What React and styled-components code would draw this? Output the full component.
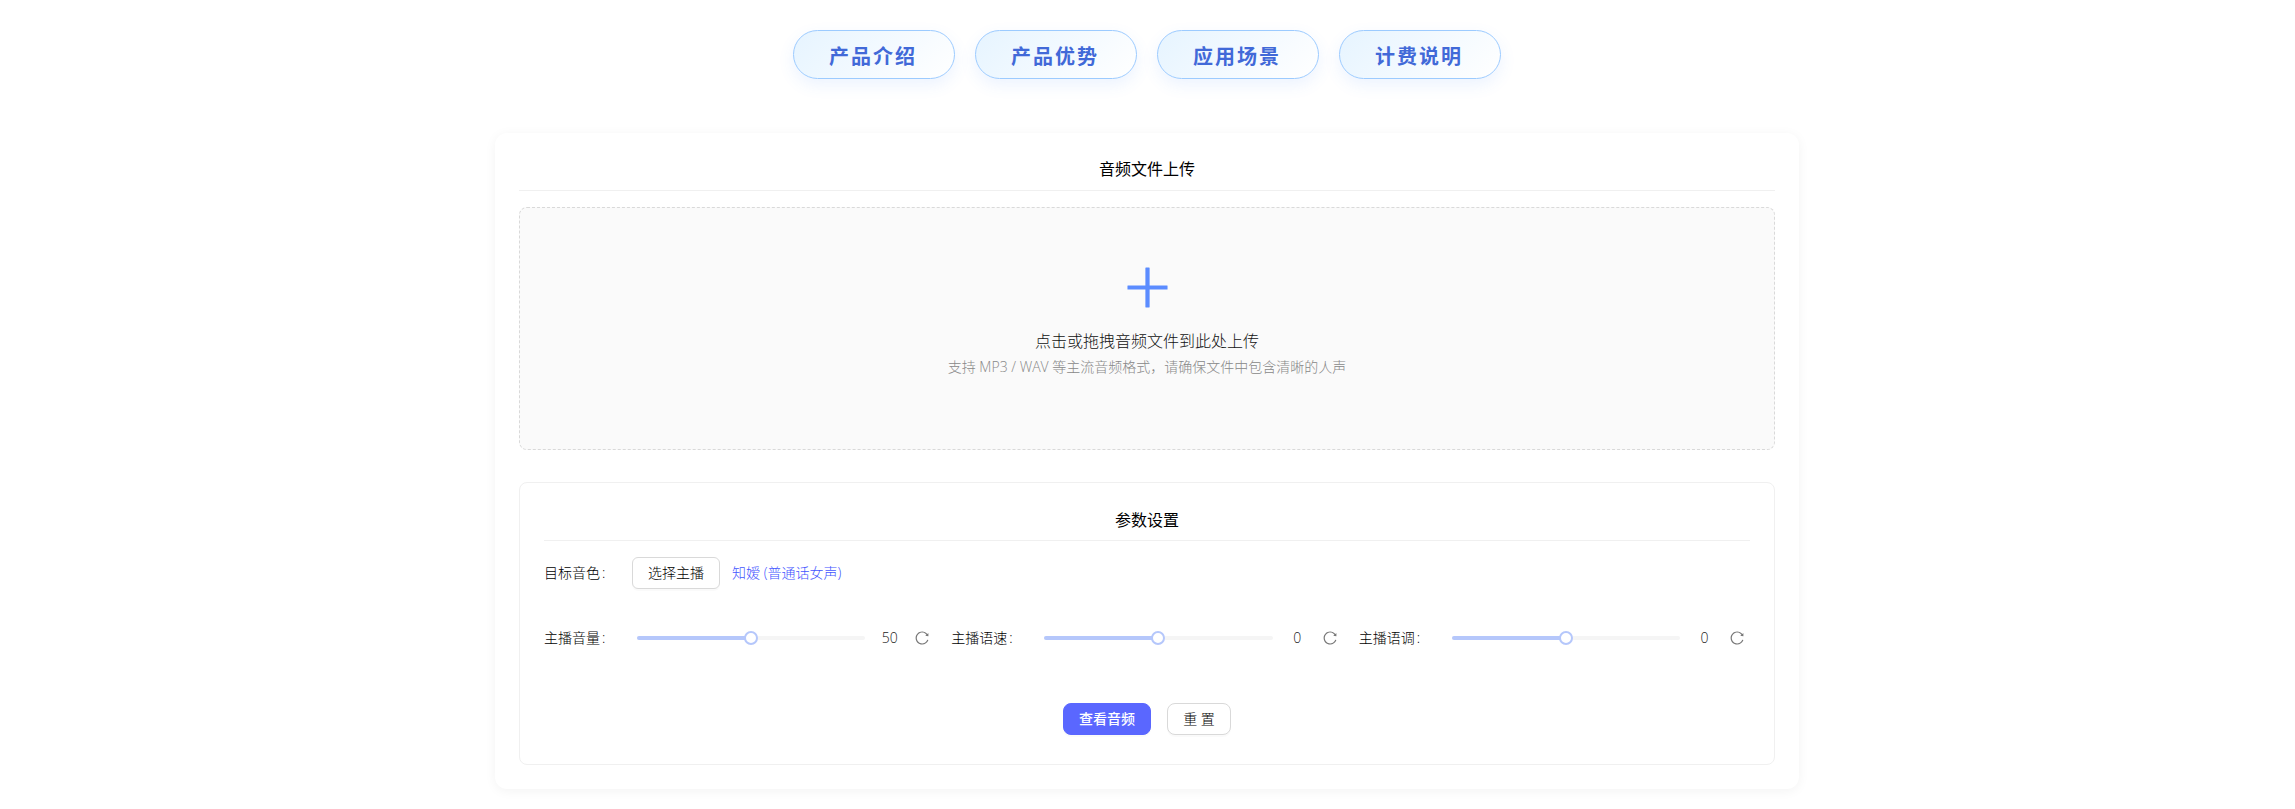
import React from 'react'
import styled, { createGlobalStyle } from 'styled-components'
import { AiOutlinePlus, AiOutlineReload } from 'react-icons/ai'

const GlobalStyle = createGlobalStyle`
  html, body {
    margin: 0;
    padding: 0;
    height: 100%;
    overflow: hidden;
    background: #fff;
  }
  body {
    font-family: "Open Sans", "Noto Sans CJK SC", sans-serif;
    font-size: 14px;
    font-weight: 300;
    color: #111;
  }
  * {
    box-sizing: border-box;
  }
`

const Page = styled.div`
  padding: 30px 1px 0 0;
`

const TabBar = styled.nav`
  display: flex;
  justify-content: center;
  gap: 20px;
  margin-bottom: 54px;
`

const Tab = styled.div`
  width: 162px;
  height: 49px;
  padding: 2px 2px 0 0;
  display: flex;
  align-items: center;
  justify-content: center;
  border: 1px solid #9ccbff;
  border-radius: 25px;
  background: linear-gradient(135deg, #e6f4ff 0%, #ffffff 100%);
  box-shadow: 0 6px 16px rgba(64, 140, 255, 0.1);
  color: #4169d8;
  font-size: 20px;
  font-weight: 700;
  letter-spacing: 2px;
`

const Card = styled.main`
  width: 1304px;
  margin: 0 auto;
  padding: 24px;
  background: #fff;
  border-radius: 12px;
  box-shadow: 0 2px 12px rgba(0, 0, 0, 0.05);
`

const SectionTitle = styled.h2`
  margin: 0 0 16px;
  padding-bottom: 9px;
  border-bottom: 1px solid #f0f0f0;
  color: #000;
  font-size: 16px;
  font-weight: 400;
  line-height: 24px;
  text-align: center;
`

const ParamsTitle = styled(SectionTitle)`
  padding-bottom: 8px;
`

const UploadZone = styled.div`
  height: 243px;
  padding-top: 51px;
  display: flex;
  flex-direction: column;
  align-items: center;
  background: #fafafa;
  border: 1px dashed #d9d9d9;
  border-radius: 8px;
`

const PlusIcon = styled(AiOutlinePlus)`
  display: block;
  font-size: 57px;
  color: #5b8cff;
  margin-bottom: 13px;
`

const UploadText = styled.p`
  margin: 0 0 3px;
  color: #111;
  font-size: 16px;
  line-height: 24px;
`

const UploadHint = styled.p`
  margin: 0;
  color: #888;
  font-size: 14px;
  line-height: 22px;
`

const ParamsBox = styled.section`
  margin-top: 32px;
  padding: 25px 24px 29px;
  border: 1px solid #f0f0f0;
  border-radius: 8px;
`

const VoiceRow = styled.div`
  display: flex;
  align-items: center;
  height: 32px;
  margin-bottom: 33px;
`

const Label = styled.span`
  flex: none;
  width: ${props => props.$width}px;
  padding-bottom: 2px;
  color: #000;
  font-size: 14px;
  white-space: nowrap;

  &::after {
    content: ':';
    margin-left: 2px;
  }
`

const Button = styled.button`
  height: 32px;
  padding: 0 0 2px;
  width: ${props => props.$width}px;
  font-family: inherit;
  font-size: 14px;
  border-radius: ${props => props.$radius}px;
  border: 1px solid ${props => (props.$primary ? '#5a67ff' : '#d9d9d9')};
  background: ${props => (props.$primary ? '#5a67ff' : '#fff')};
  color: ${props => (props.$primary ? '#fff' : '#000')};
  font-weight: ${props => (props.$primary ? 500 : 300)};
  box-shadow: 0 2px 0 rgba(0, 0, 0, 0.02);
`

const VoiceName = styled.span`
  margin-left: 12px;
  padding-bottom: 2px;
  color: #4455ff;
  font-size: 14px;
`

const SliderGrid = styled.div`
  display: grid;
  grid-template-columns: repeat(3, 1fr);
  column-gap: 16px;
  margin-bottom: 49px;
`

const SliderItem = styled.div`
  display: flex;
  align-items: center;
  height: 32px;
  padding-right: 5px;
`

const Track = styled.div`
  position: relative;
  flex: 1;
  height: 4px;
  border-radius: 2px;
  background: #f5f5f5;
`

const TrackFill = styled.div`
  height: 100%;
  border-radius: 2px;
  background: #b5c7fb;
`

const Handle = styled.div`
  position: absolute;
  top: 50%;
  width: 14px;
  height: 14px;
  border-radius: 50%;
  background: #fff;
  border: 2px solid #b5c7fb;
  transform: translate(-50%, -50%);
`

const Value = styled.span`
  flex: none;
  width: 49px;
  padding-bottom: 1px;
  color: #222;
  font-size: 14px;
  text-align: center;
`

const ResetIcon = styled(AiOutlineReload)`
  flex: none;
  display: block;
  font-size: 16px;
  color: #777;
`

const Actions = styled.div`
  display: flex;
  justify-content: center;
  gap: 16px;
`

const sliders = [
  { label: '主播音量', value: 50, percent: 50 },
  { label: '主播语速', value: 0, percent: 50 },
  { label: '主播语调', value: 0, percent: 50 },
]

export default function App() {
  return (
    <Page>
      <GlobalStyle />
      <TabBar>
        <Tab>产品介绍</Tab>
        <Tab>产品优势</Tab>
        <Tab>应用场景</Tab>
        <Tab>计费说明</Tab>
      </TabBar>
      <Card>
        <SectionTitle>音频文件上传</SectionTitle>
        <UploadZone>
          <PlusIcon />
          <UploadText>点击或拖拽音频文件到此处上传</UploadText>
          <UploadHint>支持 MP3 / WAV 等主流音频格式，请确保文件中包含清晰的人声</UploadHint>
        </UploadZone>
        <ParamsBox>
          <ParamsTitle>参数设置</ParamsTitle>
          <VoiceRow>
            <Label $width={88}>目标音色</Label>
            <Button $width={88} $radius={6}>选择主播</Button>
            <VoiceName>知嫒 (普通话女声)</VoiceName>
          </VoiceRow>
          <SliderGrid>
            {sliders.map(item => (
              <SliderItem key={item.label}>
                <Label $width={93}>{item.label}</Label>
                <Track>
                  <TrackFill style={{ width: `${item.percent}%` }} />
                  <Handle style={{ left: `${item.percent}%` }} />
                </Track>
                <Value>{item.value}</Value>
                <ResetIcon />
              </SliderItem>
            ))}
          </SliderGrid>
          <Actions>
            <Button $primary $width={88} $radius={8}>查看音频</Button>
            <Button $width={64} $radius={8}>重 置</Button>
          </Actions>
        </ParamsBox>
      </Card>
    </Page>
  )
}
